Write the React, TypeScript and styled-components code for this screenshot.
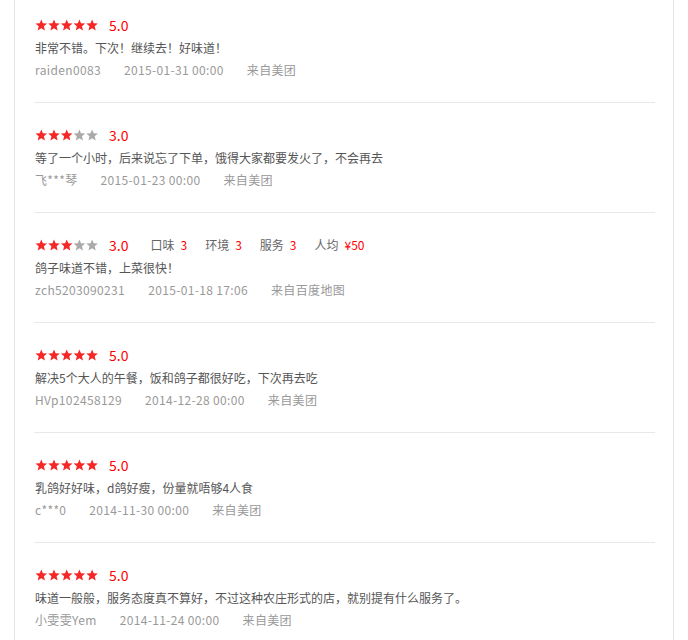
import React from "react";
import styled, { createGlobalStyle } from "styled-components";

const GlobalStyle = createGlobalStyle`
  html, body { margin: 0; padding: 0; background: #fff; }
  body { font-family: "Noto Sans CJK SC", "Microsoft YaHei", sans-serif; }
`;

const Panel = styled.div`
  margin-left: 14px;
  width: 660px;
  box-sizing: border-box;
  border-left: 1px solid #e3e3e3;
  border-right: 1px solid #e3e3e3;
  padding: 0 18px 0 19px;
  min-height: 640px;
`;

const Item = styled.div`
  padding: 19px 0 21px 1px;
  border-bottom: 1px solid #e8e8e8;
  &:first-child { padding-top: 12px; }
`;

const RatingRow = styled.div`
  display: flex;
  align-items: center;
  height: 25px;
`;

const Score = styled.span`
  margin-left: 10px;
  font-size: 14px;
  color: #f00;
  line-height: 24px;
`;

const SubScore = styled.span<{ $first?: boolean }>`
  font-size: 12px;
  color: #666;
  margin-left: ${(p) => (p.$first ? "22px" : "18px")};
  b { font-weight: normal; color: #f00; margin-left: 6px; }
`;

const Content = styled.div`
  font-size: 12px;
  color: #555;
  line-height: 22px;
`;

const Meta = styled.div`
  font-size: 12px;
  color: #999;
  line-height: 22px;
  letter-spacing: 0.35px;
  display: flex;
  span { margin-right: 23px; }
`;

const Star: React.FC<{ x: number; on: boolean }> = ({ x, on }) => (
  <path
    transform={`translate(${x},0)`}
    fill={on ? "#f52828" : "#aaaaaa"}
    d="M6.3 0.4 L7.9 4.3 L12.1 4.6 L8.9 7.3 L9.9 11.4 L6.3 9.2 L2.7 11.4 L3.7 7.3 L0.5 4.6 L4.7 4.3 Z"
  />
);

const Stars: React.FC<{ n: number }> = ({ n }) => (
  <svg width="64" height="12" viewBox="0 0 64 12">
    {[0, 1, 2, 3, 4].map((i) => (
      <Star key={i} x={i * 12.7} on={i < n} />
    ))}
  </svg>
);

type Review = {
  stars: number;
  score: string;
  text: string;
  user: string;
  date: string;
  src: string;
  subs?: [string, string][];
};

const reviews: Review[] = [
  { stars: 5, score: "5.0", text: "非常不错。下次！继续去！好味道！", user: "raiden0083", date: "2015-01-31 00:00", src: "来自美团" },
  { stars: 3, score: "3.0", text: "等了一个小时，后来说忘了下单，饿得大家都要发火了，不会再去", user: "飞***琴", date: "2015-01-23 00:00", src: "来自美团" },
  {
    stars: 3, score: "3.0", text: "鸽子味道不错，上菜很快！", user: "zch5203090231", date: "2015-01-18 17:06", src: "来自百度地图",
    subs: [["口味", "3"], ["环境", "3"], ["服务", "3"], ["人均", "¥50"]],
  },
  { stars: 5, score: "5.0", text: "解决5个大人的午餐，饭和鸽子都很好吃，下次再去吃", user: "HVp102458129", date: "2014-12-28 00:00", src: "来自美团" },
  { stars: 5, score: "5.0", text: "乳鸽好好味，d鸽好瘦，份量就唔够4人食", user: "c***0", date: "2014-11-30 00:00", src: "来自美团" },
  { stars: 5, score: "5.0", text: "味道一般般，服务态度真不算好，不过这种农庄形式的店，就别提有什么服务了。", user: "小雯雯Yem", date: "2014-11-24 00:00", src: "来自美团" },
];

export default function App() {
  return (
    <>
      <GlobalStyle />
      <Panel>
        {reviews.map((r, i) => (
          <Item key={i}>
            <RatingRow>
              <Stars n={r.stars} />
              <Score>{r.score}</Score>
              {r.subs?.map(([k, v], j) => (
                <SubScore key={k} $first={j === 0}>
                  {k}
                  <b>{v}</b>
                </SubScore>
              ))}
            </RatingRow>
            <Content>{r.text}</Content>
            <Meta>
              <span>{r.user}</span>
              <span>{r.date}</span>
              <span>{r.src}</span>
            </Meta>
          </Item>
        ))}
      </Panel>
    </>
  );
}
